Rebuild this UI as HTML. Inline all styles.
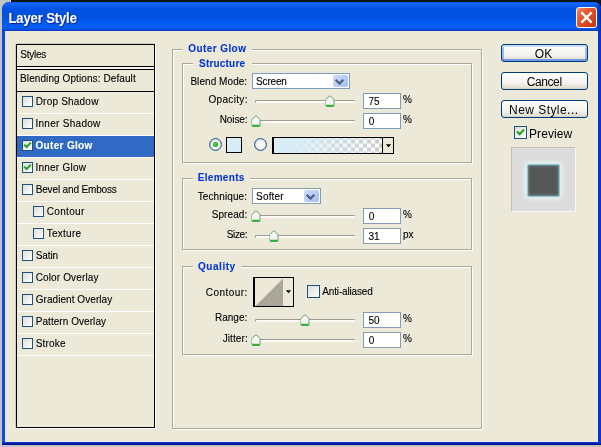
<!DOCTYPE html>
<html>
<head>
<meta charset="utf-8">
<title>Layer Style</title>
<style>
html,body{margin:0;padding:0;}
body{will-change:transform;width:601px;height:447px;overflow:hidden;position:relative;background:#c4c4c4;font-family:"Liberation Sans",sans-serif;font-size:10px;color:#000;}
.abs,.abs *{position:absolute;}
#win{left:2px;top:2px;width:599px;height:443px;background:#0a4ce8;border-radius:7px 7px 0 0;overflow:hidden;}
#topstrip{left:11px;top:0;width:590px;height:3px;background:#0b1518;}
#trc{left:590px;top:0;width:11px;height:12px;background:#0b1518;}
#title{left:0;top:0;width:599px;height:29px;background:linear-gradient(to bottom,#0a50e6 0,#1668fa 1.5px,#0c5ef2 3.5px,#0052e2 7px,#0051e0 14px,#0258ec 20px,#0660f8 25px,#0656ea 27px,#0a42cc 28px,#0a38c0 29px);}
#rshade{right:0;top:0;width:5px;height:29px;background:linear-gradient(to right,rgba(0,30,160,0),rgba(0,30,160,.8));}
#close{left:574px;top:5px;width:19px;height:19px;border:1px solid #fff;border-radius:3px;background:linear-gradient(135deg,#f0906c 0,#e6603a 30%,#d6451e 65%,#bd3410 100%);}
#client{left:3px;top:29px;width:593px;height:411px;background:#ece9d8;}
#bb{left:0;top:440px;width:599px;height:3px;background:linear-gradient(to bottom,#0c40e4 0,#0a2cc4 1px,#00128e 2px,#000c80 3px);}
#rb{left:596px;top:29px;width:3px;height:411px;background:linear-gradient(to right,#0726b4 0,#0a36d8 1.2px,#0a30d0 3px);}
#list{left:16px;top:44px;width:137px;height:382px;border:1px solid #000;box-shadow:1px 1px 0 #fff, -0.5px -0.5px 0 rgba(0,0,0,.25);}
.row{left:0;width:137px;height:21px;border-bottom:1px solid #fff;}
.cb{width:9px;height:9px;border:1px solid #1c5180;background:linear-gradient(135deg,#dcdcd7,#fff);}
.cb13{width:11px;height:11px;border:1px solid #1c5180;background:linear-gradient(135deg,#dcdcd7,#fff);}
.hl{background:#316ac5;color:#fff;font-weight:bold;}
.grp{border:1px solid #aca899;box-shadow:1px 1px 0 #fff, inset 1px 1px 0 #fff;}
.leg{background:#ece9d8;color:#0a3cd0;font-weight:bold;white-space:nowrap;height:13px;line-height:13px;}
.lbl{white-space:nowrap;text-align:right;width:80px;}
.unit{white-space:nowrap;}
.inp{width:36px;height:14px;border:1px solid #7f9db9;background:#fff;}
.sel{height:14px;border:1px solid #7f9db9;background:#fff;}
.sel i{right:1px;top:1px;width:15px;height:12px;border-radius:2px;background:linear-gradient(135deg,#cddafc 0,#bccdf8 50%,#a9bcf2 100%);}
.trk{height:2px;background:#fbfaf4;border-top:1px solid #9f9d91;border-left:1px solid #9f9d91;border-radius:2px 1px 1px 2px;box-sizing:border-box;height:3px;}
.radio{width:11px;height:11px;border:1px solid #285c92;box-shadow:inset 0 0 0 0.6px rgba(40,92,146,.35);border-radius:50%;background:radial-gradient(circle at 65% 65%,#fff 0,#f3f3ee 50%,#dcdcd4 100%);}
.radio b{left:3.2px;top:3.2px;width:4.6px;height:4.6px;border-radius:50%;background:radial-gradient(circle at 45% 45%,#4fdc4f 0,#22b022 55%,#188c18 100%);}
#chk{background-color:#fff;background-image:linear-gradient(45deg,#ccc 25%,transparent 25%,transparent 75%,#ccc 75%),linear-gradient(45deg,#ccc 25%,transparent 25%,transparent 75%,#ccc 75%);background-size:8px 8px;background-position:0 0,4px 4px;}
#grad{background:linear-gradient(to right,rgba(216,237,246,1) 0,rgba(216,237,246,1) 15%,rgba(216,237,246,0) 100%);}
.btn{left:501px;width:85px;height:16px;border:1px solid #003c74;border-radius:3px;background:linear-gradient(to bottom,#fff 0,#f4f3ee 60%,#e3e0d3 90%,#d6d0c5 100%);font-size:12px;}
.def{box-shadow:inset 0 -2px 0 0 #7098e4, inset 0 2px 0 0 #cbdcfb, inset 2px 0 0 0 #9bb9f2, inset -2px 0 0 0 #9bb9f2;}
.t{white-space:nowrap;line-height:normal;-webkit-text-stroke:0.1px currentColor;}
.big{-webkit-text-stroke:0;}
</style>
</head>
<body class="abs">

<div id="topstrip"></div><div id="trc"></div>
<div id="win">
  <div id="title"><div id="rshade"></div></div>
  <div id="close"><svg width="19" height="19" viewBox="0 0 19 19" style="left:0;top:0"><path d="M4.4 4.4 L14.6 14.6 M14.6 4.4 L4.4 14.6" stroke="#fff" stroke-width="2.3" fill="none"/></svg></div>
  <div id="client"></div><div id="rb"></div><div id="bb"></div>
</div>
<span class="t" id="ttext" style="left:8.40px;top:11px;letter-spacing:-0.090px;font-size:13px;font-weight:bold;color:#fff;text-shadow:1px 1px 1px #0a1f8c;transform:scale(1,1.09);transform-origin:0 79%;">Layer Style</span>

<div id="list">
  <div class="row" style="top:0;border-bottom:1px solid #000;"></div>
  <div style="left:0;top:22px;width:137px;height:2px;background:#f6f4ea"></div>
  <div class="row" style="top:24px;border-top:1px solid #000;border-bottom:1px solid #000;height:21px"></div>
  <div class="row" style="top:47px"><div class="cb" style="left:5px;top:4px"></div></div>
  <div class="row" style="top:69px"><div class="cb" style="left:5px;top:4px"></div></div>
  <div class="row hl" style="top:91px"><div class="cb" style="left:5px;top:4px"><svg width="9" height="9" viewBox="0 0 9 9" style="left:0;top:0"><path d="M1.2 3.6 L3.6 6 L7.8 1.6" stroke="#21a121" stroke-width="2" fill="none"/></svg></div></div>
  <div class="row" style="top:113px"><div class="cb" style="left:5px;top:4px"><svg width="9" height="9" viewBox="0 0 9 9" style="left:0;top:0"><path d="M1.2 3.6 L3.6 6 L7.8 1.6" stroke="#21a121" stroke-width="2" fill="none"/></svg></div></div>
  <div class="row" style="top:135px"><div class="cb" style="left:5px;top:4px"></div></div>
  <div class="row" style="top:157px"><div class="cb" style="left:16px;top:4px"></div></div>
  <div class="row" style="top:179px"><div class="cb" style="left:16px;top:4px"></div></div>
  <div class="row" style="top:201px"><div class="cb" style="left:5px;top:4px"></div></div>
  <div class="row" style="top:223px"><div class="cb" style="left:5px;top:4px"></div></div>
  <div class="row" style="top:245px"><div class="cb" style="left:5px;top:4px"></div></div>
  <div class="row" style="top:267px"><div class="cb" style="left:5px;top:4px"></div></div>
  <div class="row" style="top:289px"><div class="cb" style="left:5px;top:4px"></div></div>
</div>
<span class="t" id="t_styles" style="left:20.36px;top:49px;letter-spacing:-0.270px;">Styles</span>
<span class="t" id="t_blend" style="left:20.06px;top:73px;letter-spacing:0.094px;">Blending Options: Default</span>
<span class="t" id="r0" style="left:35.70px;top:96px;letter-spacing:0.207px;">Drop Shadow</span>
<span class="t" id="r1" style="left:35.40px;top:118px;letter-spacing:0.293px;">Inner Shadow</span>
<span class="t" id="r2" style="left:35.40px;top:140px;letter-spacing:0.340px;font-weight:bold;color:#fff;">Outer Glow</span>
<span class="t" id="r3" style="left:35.40px;top:162px;letter-spacing:0.240px;">Inner Glow</span>
<span class="t" id="r4" style="left:35.70px;top:184px;letter-spacing:-0.150px;">Bevel and Emboss</span>
<span class="t" id="r5" style="left:46.70px;top:206px;letter-spacing:0.345px;">Contour</span>
<span class="t" id="r6" style="left:46.70px;top:228px;letter-spacing:0.270px;">Texture</span>
<span class="t" id="r7" style="left:35.70px;top:250px;letter-spacing:-0.090px;">Satin</span>
<span class="t" id="r8" style="left:35.70px;top:272px;letter-spacing:0.137px;">Color Overlay</span>
<span class="t" id="r9" style="left:35.70px;top:294px;letter-spacing:0.060px;">Gradient Overlay</span>
<span class="t" id="r10" style="left:35.70px;top:316px;letter-spacing:0.062px;">Pattern Overlay</span>
<span class="t" id="r11" style="left:35.70px;top:338px;letter-spacing:0.198px;">Stroke</span>

<div class="grp" style="left:172px;top:49px;width:308px;height:378px"></div><div class="leg" style="left:183px;top:43px;width:69px;"></div><span class="t" id="g0" style="left:188.34px;top:43px;letter-spacing:0.410px;font-weight:bold;color:#0636d6;">Outer Glow</span>
<div class="grp" style="left:182px;top:63px;width:288px;height:98px"></div><div class="leg" style="left:193px;top:57px;width:59px;"></div><span class="t" id="g1" style="left:199.06px;top:58px;letter-spacing:0.190px;font-weight:bold;color:#0636d6;">Structure</span>
<span class="t" id="l0" style="left:190.38px;top:76px;letter-spacing:0.063px;">Blend Mode:</span>
<div class="sel" style="left:252px;top:73px;width:96px"><i></i><svg width="11" height="8" viewBox="0 0 11 8" style="right:4px;top:4px"><path d="M1.7 1.7 L5.5 5.5 L9.3 1.7" stroke="#4d6185" stroke-width="2.3" fill="none"/></svg></div><span class="t" id="s0" style="left:256.06px;top:76px;letter-spacing:-0.162px;">Screen</span>
<span class="t" id="l1" style="left:208.38px;top:94px;letter-spacing:0.345px;">Opacity:</span>
<div class="trk" style="left:255px;top:100px;width:100px"></div><svg class="thumb" width="11" height="13" viewBox="0 0 11 13" style="left:325.1px;top:94.8px"><path d="M1 4.6 L4.2 1.1 L5.8 1.1 L9 4.6 L9 11 Q9 11.5 8.5 11.5 L1.5 11.5 Q1 11.5 1 11 Z" fill="#f4f4f0" stroke="#68a082" stroke-width="1"/><path d="M1.6 10.1 H8.4 V10.6 Q8.4 11.2 7.8 11.2 H2.2 Q1.6 11.2 1.6 10.6 Z" fill="#2fb62f" stroke="#2fb62f" stroke-width="0.6"/><path d="M1.55 5.2 V9.4" stroke="#fff" stroke-width="0.9" fill="none"/></svg>
<div class="inp" style="left:363px;top:93px"></div><span class="t" id="v0" style="left:368.38px;top:96px;letter-spacing:0.000px;">75</span><span class="t" id="u0" style="left:403.06px;top:94px;letter-spacing:0.000px;">%</span>
<span class="t" id="l2" style="left:219.72px;top:114px;letter-spacing:-0.090px;">Noise:</span>
<div class="trk" style="left:255px;top:120px;width:100px"></div><svg class="thumb" width="11" height="13" viewBox="0 0 11 13" style="left:250.5px;top:114.8px"><path d="M1 4.6 L4.2 1.1 L5.8 1.1 L9 4.6 L9 11 Q9 11.5 8.5 11.5 L1.5 11.5 Q1 11.5 1 11 Z" fill="#f4f4f0" stroke="#68a082" stroke-width="1"/><path d="M1.6 10.1 H8.4 V10.6 Q8.4 11.2 7.8 11.2 H2.2 Q1.6 11.2 1.6 10.6 Z" fill="#2fb62f" stroke="#2fb62f" stroke-width="0.6"/><path d="M1.55 5.2 V9.4" stroke="#fff" stroke-width="0.9" fill="none"/></svg>
<div class="inp" style="left:363px;top:113px"></div><span class="t" id="v1" style="left:368.68px;top:116px;letter-spacing:0.000px;">0</span><span class="t" id="u1" style="left:403.06px;top:114px;letter-spacing:0.000px;">%</span>
<div class="radio" style="left:209px;top:138px"><b></b></div>
<div id="sw1" style="left:226px;top:137px;width:14px;height:14px;border:1px solid #000;background:#d8edf6"></div>
<div class="radio" style="left:254px;top:138px"></div>
<div id="gsw" style="left:272px;top:137px;width:119px;height:15px;border:1px solid #000;border-left-width:2px;background:#ece9d8">
  <svg width="108" height="15" viewBox="0 0 108 15" style="left:0;top:0"><defs><pattern id="ck" width="8" height="8" patternUnits="userSpaceOnUse" x="1" y="1.5"><rect width="8" height="8" fill="#fdfdfd"/><rect x="4" y="0" width="4" height="4" fill="#cbcbcb"/><rect x="0" y="4" width="4" height="4" fill="#cbcbcb"/></pattern></defs><rect width="108" height="15" fill="url(#ck)"/></svg>
  <div id="grad" style="left:0;top:0;width:108px;height:15px;"></div>
  <div style="left:108px;top:0;width:1px;height:15px;background:#000"></div>
  <svg width="7" height="4" viewBox="0 0 7 4" style="left:110.5px;top:5.7px"><path d="M0.8 0.3 H6.2 L3.5 3.3 Z" fill="#000"/></svg>
</div>

<div class="grp" style="left:182px;top:178px;width:288px;height:70px"></div><div class="leg" style="left:193px;top:172px;width:57px;"></div><span class="t" id="g2" style="left:197.70px;top:172px;letter-spacing:0.321px;font-weight:bold;color:#0636d6;">Elements</span>
<span class="t" id="l3" style="left:197.70px;top:191px;letter-spacing:0.110px;">Technique:</span>
<div class="sel" style="left:252px;top:188px;width:67px"><i></i><svg width="11" height="8" viewBox="0 0 11 8" style="right:4px;top:4px"><path d="M1.7 1.7 L5.5 5.5 L9.3 1.7" stroke="#4d6185" stroke-width="2.3" fill="none"/></svg></div><span class="t" id="s1" style="left:256.06px;top:191px;letter-spacing:0.180px;">Softer</span>
<span class="t" id="l4" style="left:211.70px;top:209px;letter-spacing:0.090px;">Spread:</span>
<div class="trk" style="left:255px;top:215px;width:100px"></div><svg class="thumb" width="11" height="13" viewBox="0 0 11 13" style="left:250.5px;top:209.8px"><path d="M1 4.6 L4.2 1.1 L5.8 1.1 L9 4.6 L9 11 Q9 11.5 8.5 11.5 L1.5 11.5 Q1 11.5 1 11 Z" fill="#f4f4f0" stroke="#68a082" stroke-width="1"/><path d="M1.6 10.1 H8.4 V10.6 Q8.4 11.2 7.8 11.2 H2.2 Q1.6 11.2 1.6 10.6 Z" fill="#2fb62f" stroke="#2fb62f" stroke-width="0.6"/><path d="M1.55 5.2 V9.4" stroke="#fff" stroke-width="0.9" fill="none"/></svg>
<div class="inp" style="left:363px;top:208px"></div><span class="t" id="v2" style="left:368.68px;top:211px;letter-spacing:0.000px;">0</span><span class="t" id="u2" style="left:403.06px;top:209px;letter-spacing:0.000px;">%</span>
<span class="t" id="l5" style="left:226.72px;top:229px;letter-spacing:-0.338px;">Size:</span>
<div class="trk" style="left:255px;top:235px;width:100px"></div><svg class="thumb" width="11" height="13" viewBox="0 0 11 13" style="left:268.5px;top:229.8px"><path d="M1 4.6 L4.2 1.1 L5.8 1.1 L9 4.6 L9 11 Q9 11.5 8.5 11.5 L1.5 11.5 Q1 11.5 1 11 Z" fill="#f4f4f0" stroke="#68a082" stroke-width="1"/><path d="M1.6 10.1 H8.4 V10.6 Q8.4 11.2 7.8 11.2 H2.2 Q1.6 11.2 1.6 10.6 Z" fill="#2fb62f" stroke="#2fb62f" stroke-width="0.6"/><path d="M1.55 5.2 V9.4" stroke="#fff" stroke-width="0.9" fill="none"/></svg>
<div class="inp" style="left:363px;top:228px"></div><span class="t" id="v3" style="left:368.38px;top:231px;letter-spacing:0.000px;">31</span><span class="t" id="u3" style="left:403.06px;top:229px;letter-spacing:0.000px;">px</span>

<div class="grp" style="left:182px;top:266px;width:288px;height:87px"></div><div class="leg" style="left:193px;top:260px;width:48px;"></div><span class="t" id="g3" style="left:198.02px;top:261px;letter-spacing:0.540px;font-weight:bold;color:#0636d6;">Quality</span>
<span class="t" id="l6" style="left:205.72px;top:287px;letter-spacing:0.449px;">Contour:</span>
<div id="csw" style="left:253px;top:277px;width:38px;height:28px;border:1px solid #000;border-left-width:2px;background:#ece9d8">
  <svg width="28" height="28" viewBox="0 0 28 28" style="left:0;top:0"><path d="M0.5 28 L28 0.5 L28 28 Z" fill="#aba798"/></svg>
  <svg width="7" height="4" viewBox="0 0 7 4" style="left:29.5px;top:11.7px"><path d="M0.8 0.3 H6.2 L3.5 3.3 Z" fill="#000"/></svg>
</div>
<div class="cb13" style="left:307px;top:285px"></div>
<span class="t" id="aa" style="left:322.36px;top:286px;letter-spacing:-0.170px;">Anti-aliased</span>
<span class="t" id="l7" style="left:215.02px;top:312px;letter-spacing:-0.000px;">Range:</span>
<div class="trk" style="left:255px;top:319px;width:100px"></div><svg class="thumb" width="11" height="13" viewBox="0 0 11 13" style="left:299.5px;top:313.8px"><path d="M1 4.6 L4.2 1.1 L5.8 1.1 L9 4.6 L9 11 Q9 11.5 8.5 11.5 L1.5 11.5 Q1 11.5 1 11 Z" fill="#f4f4f0" stroke="#68a082" stroke-width="1"/><path d="M1.6 10.1 H8.4 V10.6 Q8.4 11.2 7.8 11.2 H2.2 Q1.6 11.2 1.6 10.6 Z" fill="#2fb62f" stroke="#2fb62f" stroke-width="0.6"/><path d="M1.55 5.2 V9.4" stroke="#fff" stroke-width="0.9" fill="none"/></svg>
<div class="inp" style="left:363px;top:312px"></div><span class="t" id="v4" style="left:368.38px;top:315px;letter-spacing:0.000px;">50</span><span class="t" id="u4" style="left:403.06px;top:313px;letter-spacing:0.000px;">%</span>
<span class="t" id="l8" style="left:222.70px;top:333px;letter-spacing:0.090px;">Jitter:</span>
<div class="trk" style="left:255px;top:339px;width:100px"></div><svg class="thumb" width="11" height="13" viewBox="0 0 11 13" style="left:250.5px;top:333.8px"><path d="M1 4.6 L4.2 1.1 L5.8 1.1 L9 4.6 L9 11 Q9 11.5 8.5 11.5 L1.5 11.5 Q1 11.5 1 11 Z" fill="#f4f4f0" stroke="#68a082" stroke-width="1"/><path d="M1.6 10.1 H8.4 V10.6 Q8.4 11.2 7.8 11.2 H2.2 Q1.6 11.2 1.6 10.6 Z" fill="#2fb62f" stroke="#2fb62f" stroke-width="0.6"/><path d="M1.55 5.2 V9.4" stroke="#fff" stroke-width="0.9" fill="none"/></svg>
<div class="inp" style="left:363px;top:332px"></div><span class="t" id="v5" style="left:368.68px;top:335px;letter-spacing:0.000px;">0</span><span class="t" id="u5" style="left:403.06px;top:333px;letter-spacing:0.000px;">%</span>

<div class="btn def" style="top:44px"></div>
<div class="btn" style="top:72px"></div>
<div class="btn" style="top:100px"></div>
<span class="t big" id="b0" style="left:534.80px;top:47px;letter-spacing:0.000px;font-size:12px;">OK</span>
<span class="t big" id="b1" style="left:526.70px;top:75px;letter-spacing:-0.396px;font-size:12px;">Cancel</span>
<span class="t big" id="b2" style="left:509.06px;top:103px;letter-spacing:0.450px;font-size:12px;">New Style...</span>
<div class="cb13" style="left:514px;top:126px"><svg width="11" height="11" viewBox="0 0 11 11" style="left:0;top:0"><path d="M2 4.6 L4.6 7.2 L9 2.6" stroke="#21a121" stroke-width="2.1" fill="none"/></svg></div>
<span class="t big" id="pv" style="left:529.02px;top:127px;letter-spacing:0.075px;font-size:12px;">Preview</span>
<div id="pbox" style="left:511px;top:147px;width:63px;height:63px;background:#dcdcdc;border-top:1px solid #c2c0b4;border-left:1px solid #c2c0b4;border-right:1px solid #f8f8f4;border-bottom:1px solid #f8f8f4">
  <div style="left:16px;top:17px;width:31px;height:31px;background:#575757;box-shadow:0 0 1px 0.8px #84c4d6, 0 0 4px 2.5px #edf5f7, inset 0 0 2px 0.5px rgba(140,200,215,.75);border-radius:1px"></div>
</div>

</body>
</html>
